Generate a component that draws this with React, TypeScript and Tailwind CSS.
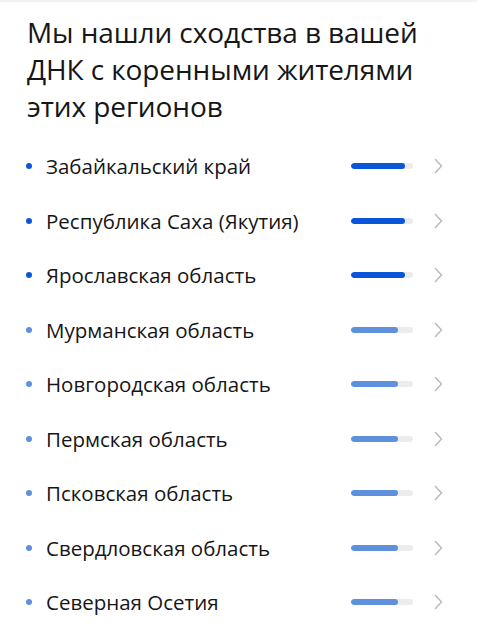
const REGIONS = [
  { name: 'Забайкальский край', pct: 87, strong: true },
  { name: 'Республика Саха (Якутия)', pct: 87, strong: true },
  { name: 'Ярославская область', pct: 87, strong: true },
  { name: 'Мурманская область', pct: 76, strong: false },
  { name: 'Новгородская область', pct: 76, strong: false },
  { name: 'Пермская область', pct: 76, strong: false },
  { name: 'Псковская область', pct: 76, strong: false },
  { name: 'Свердловская область', pct: 76, strong: false },
  { name: 'Северная Осетия', pct: 76, strong: false },
];

function Chevron() {
  return (
    <svg width="9" height="16" viewBox="0 0 9 16" fill="none" className="shrink-0">
      <path d="M1.5 1.5L7.5 8L1.5 14.5" stroke="#b8b8b8" strokeWidth="1.4" strokeLinecap="round" strokeLinejoin="round" />
    </svg>
  );
}

export default function App() {
  return (
    <div
      className="w-[477px] h-[639px] overflow-hidden bg-white border-t-2 border-[#f2f2f2] text-[#161616]"
      style={{ fontFamily: '"Open Sans", "Noto Sans", sans-serif' }}
    >
      <h1 className="pl-[27px] pr-6 pt-[12px] text-[28px] leading-[37px] tracking-[-0.1px] font-normal">
        Мы нашли сходства в вашей ДНК с коренными жителями этих регионов
      </h1>
      <ul className="mt-[14px]">
        {REGIONS.map((r) => (
          <li key={r.name} className="flex items-center h-[54.5px] pl-[26px] pr-[34px]">
            <span
              className={`w-[6px] h-[6px] rounded-full shrink-0 ${r.strong ? 'bg-[#0a56d8]' : 'bg-[#5e90dd]'}`}
            />
            <span className="ml-[14px] flex-1 text-[20.5px] leading-6">{r.name}</span>
            <div className="w-[62px] h-[6px] rounded-full bg-[#ececec] overflow-hidden">
              <div
                className={`h-full rounded-full ${r.strong ? 'bg-[#0a56d8]' : 'bg-[#5e90dd]'}`}
                style={{ width: `${r.pct}%` }}
              />
            </div>
            <div className="ml-[21px]">
              <Chevron />
            </div>
          </li>
        ))}
      </ul>
    </div>
  );
}
